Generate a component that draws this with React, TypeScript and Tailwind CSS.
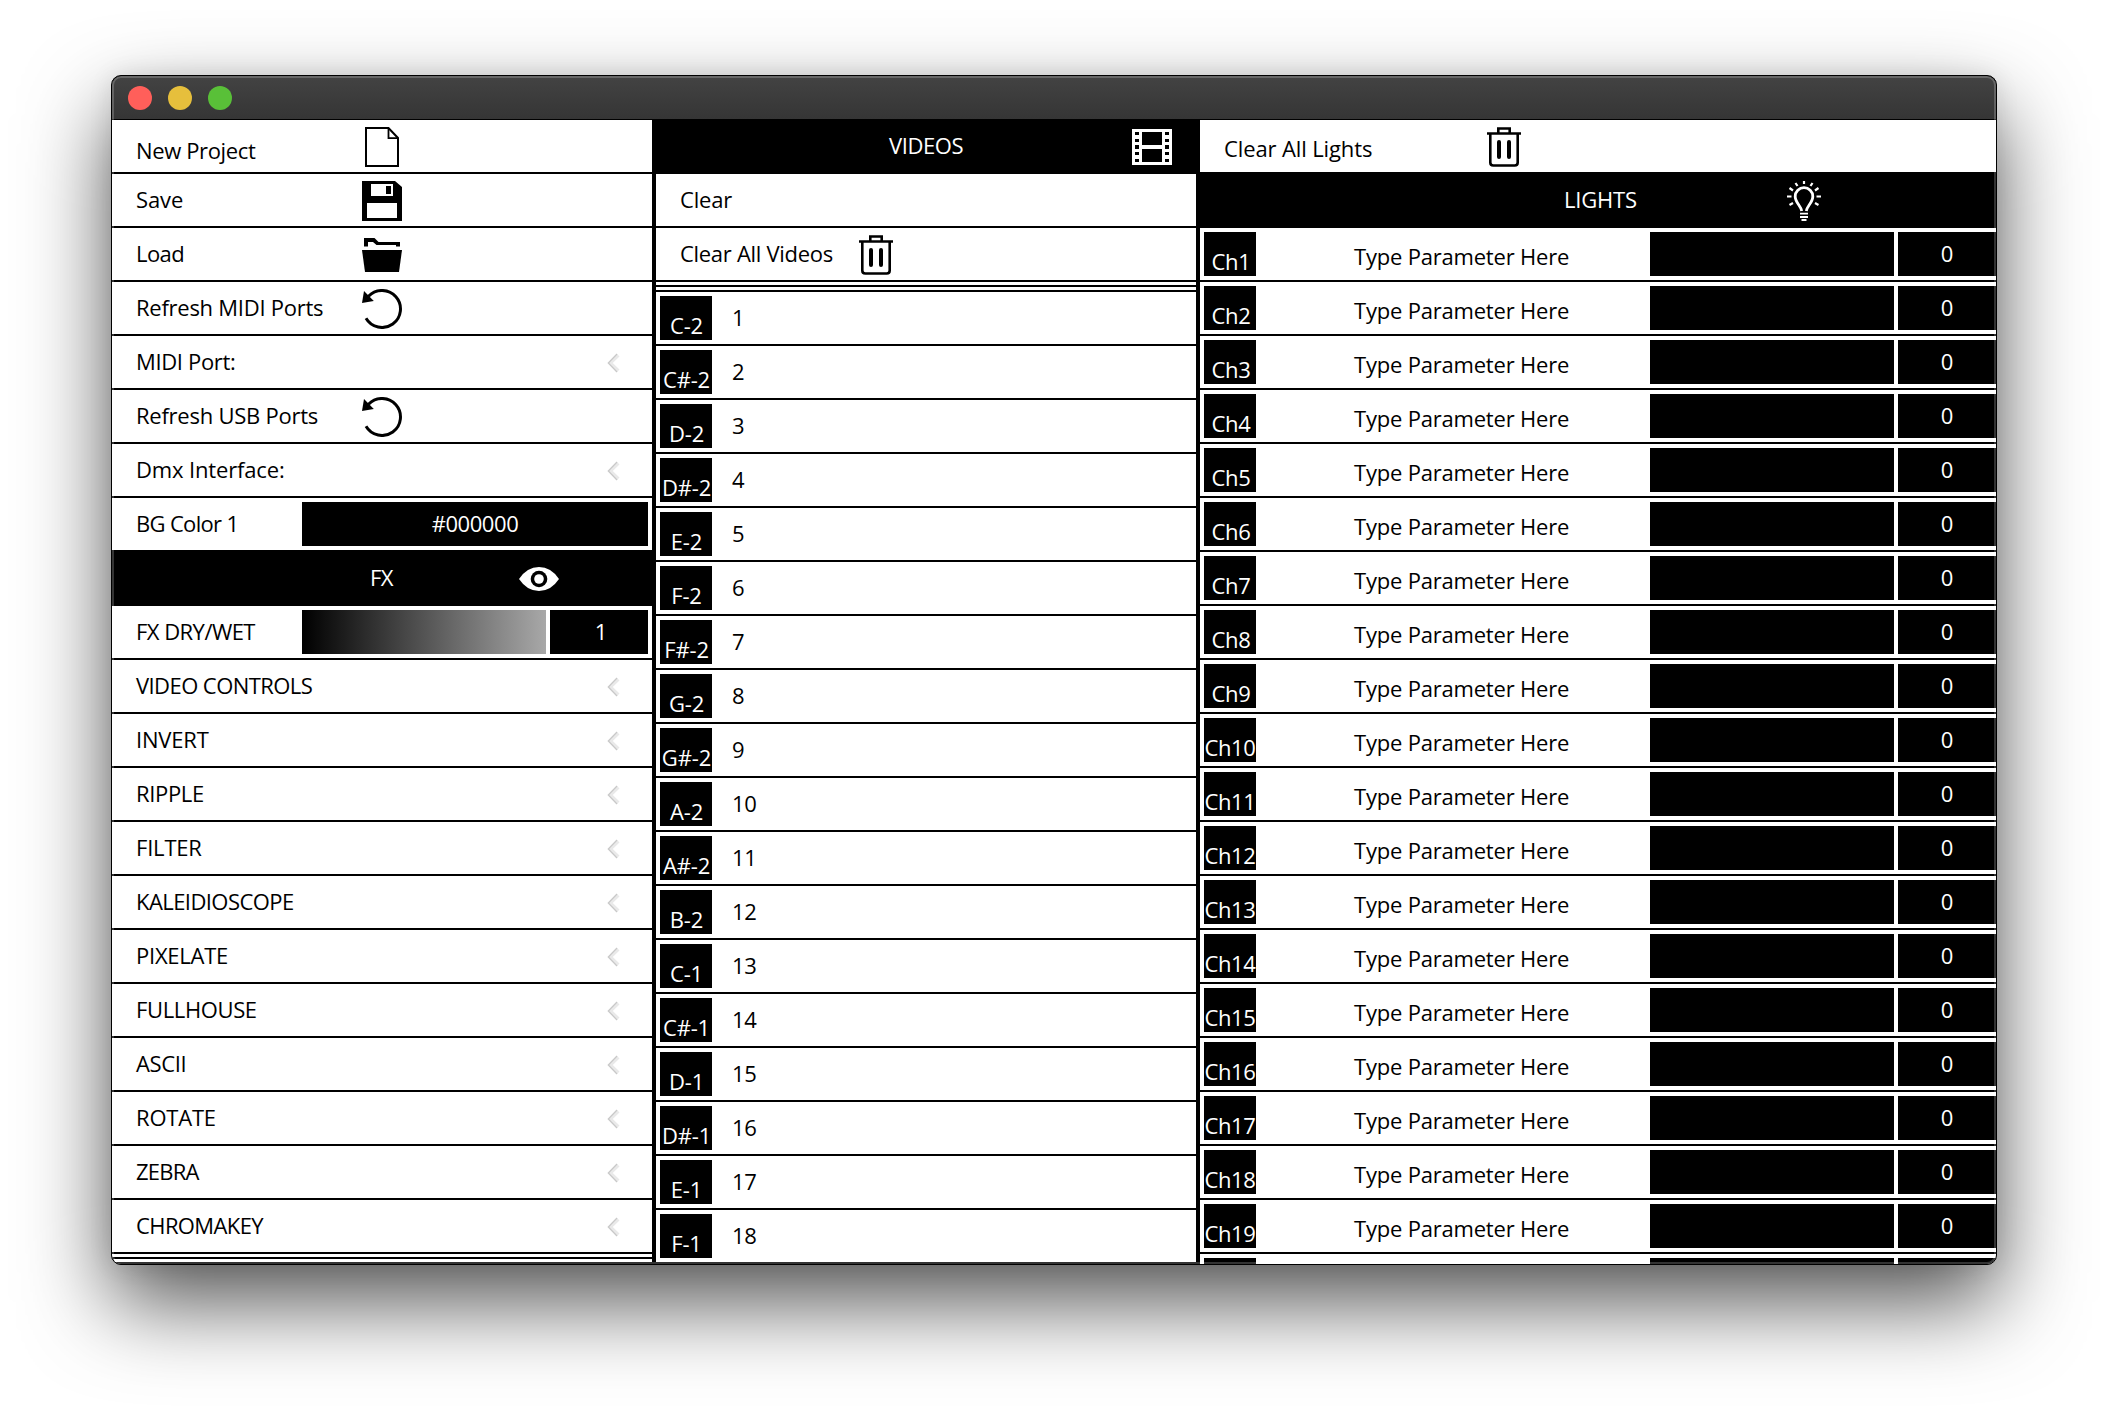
import React from "react";

const BASE = "whitespace-pre pb-0.5 text-[22px] leading-[28px]";

function Label({ children, className = "" }: { children: React.ReactNode; className?: string }) {
  return <span className={`${BASE} ${className}`}>{children}</span>;
}

function FileIcon() {
  return (
    <svg className="mt-0.5 h-10 w-10" viewBox="0 0 40 40" fill="none" stroke="#000">
      <path d="M4 1H26.5L36 11V39H4Z" strokeWidth="2" />
      <path d="M26.5 1V11.2H36" strokeWidth="1.8" />
    </svg>
  );
}

function SaveIcon() {
  return (
    <svg className="mt-0.5 h-10 w-10" viewBox="0 0 40 40">
      <path fillRule="evenodd" d="M0 0H33L40 6V40H0ZM9 3V15H31V3ZM5 22V37H35V22Z" />
      <rect x="24" y="5" width="5" height="8" />
    </svg>
  );
}

function FolderIcon() {
  return (
    <svg className="mt-0.5 h-[34px] w-10" viewBox="0 0 40 34">
      <path d="M2 0H12.500L16.500 4H38V8.500H34V7H14.500L11 4H6V8.500H2Z" />
      <path d="M0 12H40L37 34H3Z" />
    </svg>
  );
}

function RefreshIcon() {
  return (
    <svg className="mt-0.5 h-10 w-10" viewBox="0 0 40 40">
      <path d="M6.500 7.300A18.500 18.500 0 1 1 4 29.300" fill="none" stroke="#000" strokeWidth="3" />
      <path d="M2 2L11.800 12L0 14Z" />
    </svg>
  );
}

function TrashIcon() {
  return (
    <svg className="mt-0.5 h-10 w-[34px]" viewBox="0 0 34 40" fill="none" stroke="#000" strokeWidth="2.600">
      <path d="M0 6.500H34" />
      <path d="M11.300 6V1.500H22.700V6" />
      <path d="M3.300 6V35.500Q3.300 38.500 6.300 38.500H27.700Q30.700 38.500 30.700 35.500V6" />
      <path d="M12 15V30M22 15V30" strokeWidth="4" strokeLinecap="round" />
    </svg>
  );
}

function FilmIcon() {
  const holes = [
    [3, 3],
    [10, 3],
    [16, 4],
    [23, 3],
    [30, 3],
  ];
  return (
    <svg className="mt-0.5 h-9 w-10" viewBox="0 0 40 36" shapeRendering="crispEdges">
      <rect width="40" height="36" fill="#fff" />
      <rect x="10" y="3" width="20" height="13" />
      <rect x="10" y="20" width="20" height="13" />
      {holes.map(([y, h]) => (
        <React.Fragment key={y}>
          <rect x="3" y={y} width="4" height={h} />
          <rect x="33" y={y} width="4" height={h} />
        </React.Fragment>
      ))}
    </svg>
  );
}

function EyeIcon() {
  return (
    <svg className="mt-0.5 h-6 w-10" viewBox="0 0 40 24">
      <path d="M0 12Q8 0 20 0T40 12Q32 24 20 24T0 12Z" fill="#fff" />
      <circle cx="20" cy="12" r="8.300" />
      <circle cx="20" cy="12" r="4.800" fill="#fff" />
    </svg>
  );
}

function BulbIcon() {
  return (
    <svg className="mt-0.5 h-10 w-[34px]" viewBox="0 0 34 40" fill="none" stroke="#fff">
      <path d="M14.700 30C14 25 8.200 21.500 8.200 15.500A8.800 8.800 0 0 1 25.800 15.500C25.800 21.500 20 25 19.300 30" strokeWidth="2.800" />
      <path d="M13 32.700H21M13 36H21M14.500 39H19.500" strokeWidth="1.800" />
      <path d="M17 0V3M8.500 2L10.500 5M25.500 2L23.500 5M2.500 7L6 9.500M31.500 7L28 9.500M0 15.500H4.500M34 15.500H29.500M2.500 24L6 22M31.500 24L28 22" strokeWidth="2.200" />
    </svg>
  );
}

function Chevron() {
  return (
    <svg className="mr-8 mt-0.5 h-5 w-[13px]" viewBox="0 0 13 20" fill="none">
      <path d="M11.300 2.200L3.300 10L11.300 17.800" stroke="#e9e9e9" strokeWidth="3.400" />
      <path d="M10 1L1.300 10L10 19" stroke="#c9c9c9" strokeWidth="1.300" />
    </svg>
  );
}

function Row({ label, labelClass = "", icon, chevron }: { label: string; labelClass?: string; icon?: React.ReactNode; chevron?: boolean }) {
  return (
    <div className="flex h-[54px] shrink-0 items-center border-b-2 border-black bg-white pl-6">
      <Label className={`w-[226px] ${labelClass}`}>{label}</Label>
      {icon && <div className="flex w-10 justify-center">{icon}</div>}
      {chevron && (
        <div className="ml-auto flex">
          <Chevron />
        </div>
      )}
    </div>
  );
}

const EFFECTS = [
  ["VIDEO CONTROLS", "tracking-[-0.57px]"],
  ["INVERT", "tracking-[-0.2px]"],
  ["RIPPLE", "tracking-[-0.35px]"],
  ["FILTER", "tracking-[-0.2px]"],
  ["KALEIDIOSCOPE", "tracking-[-0.57px]"],
  ["PIXELATE", "tracking-[-0.25px]"],
  ["FULLHOUSE", "tracking-[-0.37px]"],
  ["ASCII", "tracking-[-0.4px]"],
  ["ROTATE", "tracking-[-0.2px]"],
  ["ZEBRA", "tracking-[-0.8px]"],
  ["CHROMAKEY", "tracking-[-0.6px]"],
];
const NOTES = ["C-2", "C#-2", "D-2", "D#-2", "E-2", "F-2", "F#-2", "G-2", "G#-2", "A-2", "A#-2", "B-2", "C-1", "C#-1", "D-1", "D#-1", "E-1", "F-1"];
const CHANNELS = Array.from({ length: 19 }, (_, i) => i + 1);

function SettingsPanel() {
  return (
    <div className="flex w-[540px] shrink-0 flex-col">
      <Row label="New Project" labelClass="pt-[10px] tracking-[-0.36px]" icon={<FileIcon />} />
      <Row label="Save" labelClass="tracking-[-0.1px]" icon={<SaveIcon />} />
      <Row label="Load" labelClass="tracking-[-0.55px]" icon={<FolderIcon />} />
      <Row label="Refresh MIDI Ports" labelClass="tracking-[-0.26px]" icon={<RefreshIcon />} />
      <Row label="MIDI Port:" labelClass="tracking-[-0.34px]" chevron />
      <Row label="Refresh USB Ports" labelClass="tracking-[-0.24px]" icon={<RefreshIcon />} />
      <Row label="Dmx Interface:" labelClass="tracking-[-0.15px]" chevron />
      <div className="flex h-[52px] shrink-0 items-center bg-white pl-6 pr-1">
        <Label className="w-[166px] tracking-[-0.67px]">BG Color 1</Label>
        <div className="flex h-11 flex-1 items-center justify-center bg-black text-white">
          <Label className="tracking-[-0.45px]">#000000</Label>
        </div>
      </div>
      <div className="flex h-14 shrink-0 items-center bg-black pl-[258px] text-white">
        <Label className="w-[149px] tracking-[-0.6px]">FX</Label>
        <EyeIcon />
      </div>
      <div className="flex h-[54px] shrink-0 items-center border-b-2 border-black bg-white pl-6 pr-1">
        <Label className="w-[166px] tracking-[-0.54px]">FX DRY/WET</Label>
        <div className="mr-1 h-11 w-[244px] bg-linear-to-r/srgb from-black to-[#a8a8a8]" />
        <div className="flex h-11 flex-1 items-center justify-center bg-black pl-1 text-white">
          <Label>1</Label>
        </div>
      </div>
      {EFFECTS.map(([name, tracking]) => (
        <Row key={name} label={name} labelClass={tracking} chevron />
      ))}
      <div className="h-[5px] shrink-0 border-b-2 border-black bg-white" />
      <div className="h-[5px] shrink-0 border-b-2 border-black bg-white" />
    </div>
  );
}

function VideosPanel() {
  return (
    <div className="flex w-[548px] shrink-0 flex-col border-x-4 border-black">
      <div className="flex h-[54px] shrink-0 items-center bg-black pb-0.5 pl-[233px] text-white">
        <Label className="w-[243px] tracking-[-0.4px]">VIDEOS</Label>
        <FilmIcon />
      </div>
      <Row label="Clear" labelClass="tracking-[-0.2px]" />
      <div className="flex h-[54px] shrink-0 items-center border-b-2 border-black bg-white pl-6">
        <Label className="w-[179px] tracking-[-0.3px]">Clear All Videos</Label>
        <TrashIcon />
      </div>
      <div className="h-[5px] shrink-0 border-b-2 border-black bg-white" />
      <div className="h-[5px] shrink-0 border-b-2 border-black bg-white" />
      {NOTES.map((note, i) => (
        <div key={note} className="flex h-[54px] shrink-0 items-center border-b-2 border-black bg-white pl-1">
          <div className="mr-5 flex h-11 w-[52px] items-end justify-center bg-black text-white">
            <Label className="-mb-px pl-px tracking-[-0.15px]">{note}</Label>
          </div>
          <Label className="tracking-[-0.3px]">{i + 1}</Label>
        </div>
      ))}
    </div>
  );
}

function LightsPanel() {
  return (
    <div className="flex min-w-0 flex-1 flex-col">
      <div className="flex h-[52px] shrink-0 items-center bg-white pl-6">
        <Label className="w-[263px] pt-[5px] tracking-[-0.12px]">Clear All Lights</Label>
        <TrashIcon />
      </div>
      <div className="flex h-14 shrink-0 items-center bg-black pl-[364px] text-white">
        <Label className="w-[223px] tracking-[-0.2px]">LIGHTS</Label>
        <BulbIcon />
      </div>
      {CHANNELS.map((ch) => (
        <div key={ch} className="flex h-[54px] shrink-0 items-center border-b-2 border-black bg-white pl-1">
          <div className="flex h-11 w-[52px] items-end justify-center bg-black text-white">
            <Label className={ch < 10 ? "-mb-px pl-0.5 tracking-[-0.25px]" : "-mb-px tracking-[-0.4px]"}>{`Ch${ch}`}</Label>
          </div>
          <Label className="w-[394px] pl-[98px] pt-[6px] tracking-[-0.2px]">Type Parameter Here</Label>
          <div className="mr-1 h-11 w-[244px] bg-black" />
          <div className="flex h-11 flex-1 items-center justify-center bg-black text-white">
            <Label>0</Label>
          </div>
        </div>
      ))}
      <div className="flex h-[10px] shrink-0 bg-white pl-1 pt-1">
        <div className="mr-[394px] w-[52px] bg-black" />
        <div className="mr-1 w-[244px] bg-black" />
        <div className="flex-1 bg-black" />
      </div>
    </div>
  );
}

export default function App() {
  return (
    <div className="h-[1412px] w-[2108px] overflow-hidden bg-white pl-[111px] pt-[75px] font-['Open_Sans',sans-serif] text-black">
      <div className="relative flex h-[1190px] w-[1886px] flex-col overflow-hidden rounded-[10px] border border-black bg-black shadow-[0_38px_86px_rgba(0,0,0,0.67),0_0_24px_rgba(0,0,0,0.09)]">
        <div className="flex h-11 shrink-0 items-center gap-4 border-b border-black bg-linear-to-b/srgb from-[#434343] to-[#353535] pl-4">
          <span className="h-6 w-6 rounded-full bg-[#ff5f5a]" />
          <span className="h-6 w-6 rounded-full bg-[#e6bf3c]" />
          <span className="h-6 w-6 rounded-full bg-[#59c038]" />
        </div>
        <div className="flex min-h-0 flex-1 overflow-hidden">
          <SettingsPanel />
          <VideosPanel />
          <LightsPanel />
        </div>
        <div className="pointer-events-none absolute inset-0 rounded-[9px] shadow-[inset_0_0_0_2px_rgba(255,255,255,0.2)]" />
      </div>
    </div>
  );
}
